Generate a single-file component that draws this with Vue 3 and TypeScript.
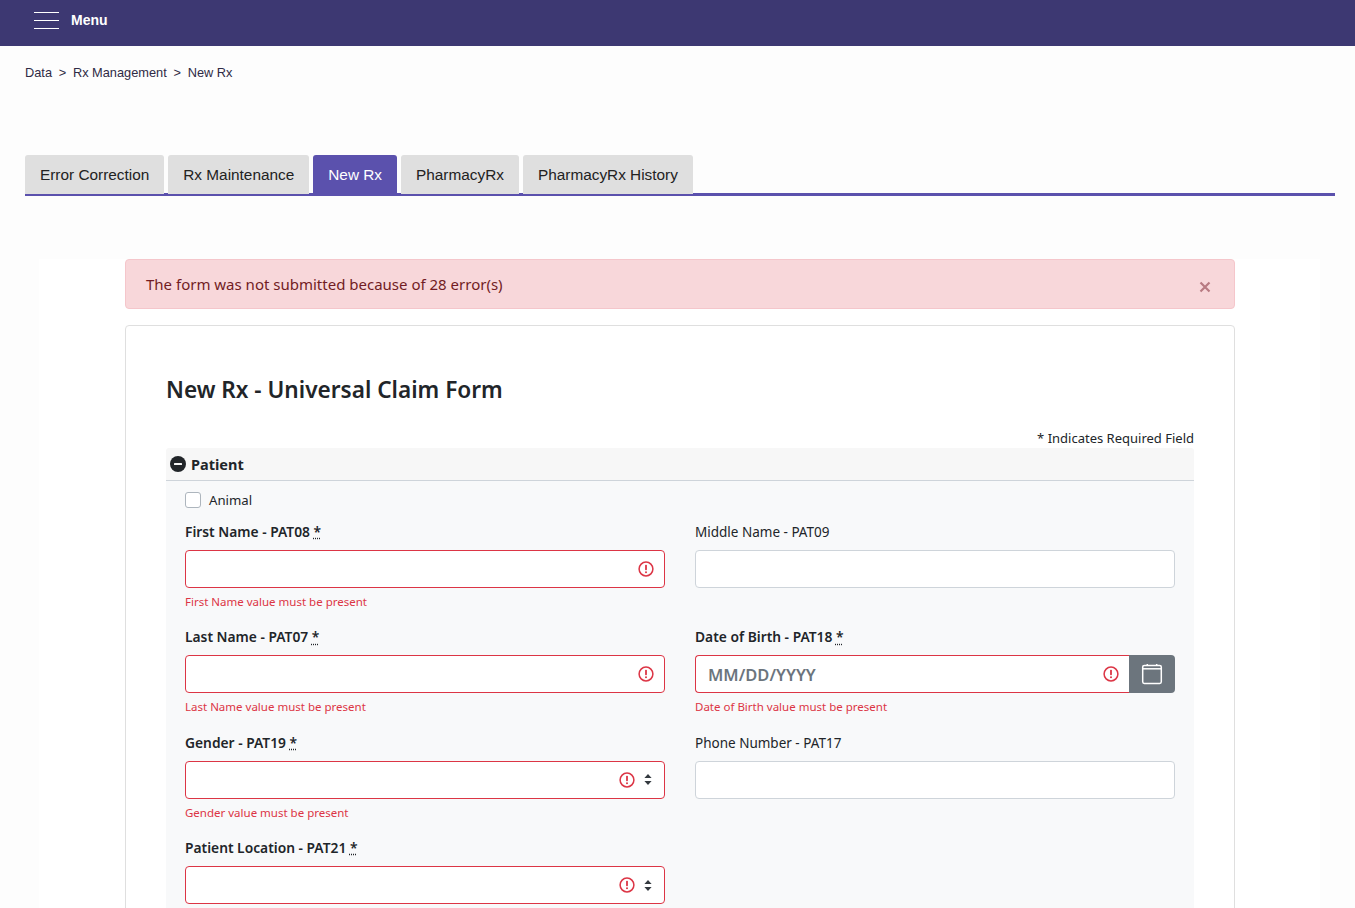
<script setup lang="ts">
interface Field {
  label: string;
  required?: boolean;
  invalid?: boolean;
  error?: string;
  kind?: 'text' | 'date' | 'select';
  placeholder?: string;
}

const tabs = ['Error Correction', 'Rx Maintenance', 'New Rx', 'PharmacyRx', 'PharmacyRx History'];
const activeTab = 'New Rx';

const rows: Field[][] = [
  [
    { label: 'First Name - PAT08', required: true, invalid: true, error: 'First Name value must be present' },
    { label: 'Middle Name - PAT09' },
  ],
  [
    { label: 'Last Name - PAT07', required: true, invalid: true, error: 'Last Name value must be present' },
    { label: 'Date of Birth - PAT18', required: true, invalid: true, error: 'Date of Birth value must be present', kind: 'date', placeholder: 'MM/DD/YYYY' },
  ],
  [
    { label: 'Gender - PAT19', required: true, invalid: true, error: 'Gender value must be present', kind: 'select' },
    { label: 'Phone Number - PAT17' },
  ],
  [
    // message sits below the fold in the screenshot
    { label: 'Patient Location - PAT21', required: true, invalid: true, kind: 'select' },
  ],
];
</script>

<template>
  <div class="page">
    <header class="topbar">
      <span class="burger"><i></i><i></i><i></i></span>
      <span class="menu-label">Menu</span>
    </header>

    <nav class="crumbs">
      <span>Data</span><span class="sep">&gt;</span>
      <span>Rx Management</span><span class="sep">&gt;</span>
      <span>New Rx</span>
    </nav>

    <div class="tabs">
      <button v-for="t in tabs" :key="t" class="tab" :class="{ active: t === activeTab }">{{ t }}</button>
    </div>

    <main class="panel">
      <div class="alert">
        <span>The form was not submitted because of 28 error(s)</span>
        <svg class="alert-close" viewBox="0 0 12 12" width="12" height="12">
          <path d="M1.5 1.5l9 9M10.5 1.5l-9 9" stroke="currentColor" stroke-width="2.2" fill="none" />
        </svg>
      </div>

      <section class="card">
        <h1 class="title">New Rx - Universal Claim Form</h1>
        <p class="req-note">* Indicates Required Field</p>

        <div class="sec-head">
          <svg viewBox="0 0 16 16" width="16" height="16">
            <circle cx="8" cy="8" r="8" fill="#212529" />
            <rect x="4" y="7" width="8" height="2" rx="0.5" fill="#f7f7f7" />
          </svg>
          <span>Patient</span>
        </div>

        <div class="sec-body">
          <label class="check"><span class="box"></span>Animal</label>

          <div v-for="(row, i) in rows" :key="i" class="row">
            <div v-for="f in row" :key="f.label" class="field">
              <div class="label" :class="{ strong: f.required }">
                {{ f.label }}
                <abbr v-if="f.required" class="star">*</abbr>
              </div>
              <div class="control-wrap">
                <div class="control" :class="{ invalid: f.invalid, joined: f.kind === 'date' }">
                  <span v-if="f.placeholder" class="placeholder">{{ f.placeholder }}</span>
                  <svg v-if="f.invalid" class="err-icon" viewBox="0 0 16 16" width="16" height="16">
                    <circle cx="8" cy="8" r="6.9" fill="none" stroke="#dc3545" stroke-width="1.5" />
                    <rect x="7.1" y="3.8" width="1.8" height="5.4" rx="0.7" fill="#dc3545" />
                    <circle cx="8" cy="11.2" r="1" fill="#dc3545" />
                  </svg>
                  <svg v-if="f.kind === 'select'" class="sort" viewBox="0 0 8 11" width="8" height="11">
                    <path d="M4 0l3.6 4H.4zM4 11L.4 7h7.2z" fill="#343a40" />
                  </svg>
                </div>
                <button v-if="f.kind === 'date'" class="cal">
                  <svg viewBox="0 0 22 22" width="22" height="22">
                    <rect x="1.7" y="2.4" width="18.6" height="18" rx="1.6" fill="none" stroke="#fff" stroke-width="1.5" />
                    <path d="M1.7 5.8h18.6" stroke="#fff" stroke-width="1.5" />
                    <path d="M6.3 1v2M15.7 1v2" stroke="#fff" stroke-width="1.5" />
                  </svg>
                </button>
              </div>
              <div v-if="f.error" class="err-msg">{{ f.error }}</div>
            </div>
          </div>
        </div>
      </section>
    </main>
  </div>
</template>

<style>
html, body {
  margin: 0;
  overflow: hidden;
  background: #fdfdfd;
}
</style>

<style scoped>
.page {
  height: 908px;
  overflow: hidden;
  background: #fdfdfd;
  font-family: "Noto Sans", "Open Sans", sans-serif;
  font-size: 14px;
  color: #212529;
}

.topbar {
  height: 46px;
  background: #3d3872;
  display: flex;
  align-items: flex-start;
  padding-left: 34px;
  box-sizing: border-box;
  color: #fff;
}
.burger {
  width: 25px;
  padding-top: 12px;
  display: flex;
  flex-direction: column;
  gap: 7px;
}
.burger i {
  display: block;
  height: 1px;
  background: #fff;
}
.menu-label {
  margin-left: 12px;
  margin-top: 12px;
  font: bold 14px/16px "Liberation Sans", Arial, sans-serif;
}

.crumbs {
  margin: 20px 0 0 25px;
  height: 13px;
  font: 12.8px/14px "Liberation Sans", Arial, sans-serif;
  color: #2f2b45;
  display: flex;
}
.sep {
  margin: 0 6.7px;
}

.tabs {
  margin: 76px 20px 0 25px;
  height: 41px;
  box-sizing: border-box;
  border-bottom: 3px solid #5b51ad;
  display: flex;
  gap: 4px;
}
.tab {
  height: 39px;
  padding: 0 15px;
  border: 0;
  border-radius: 3px 3px 0 0;
  background: #dfdfdf;
  color: #222;
  font: 15.37px/38px "Liberation Sans", Arial, sans-serif;
}
.tab.active {
  background: #5b51ad;
  color: #fff;
}

.panel {
  margin: 63px 35px 0 39px;
  padding: 0 85px 0 86px;
  background: #fff;
  height: 700px;
}

.alert {
  height: 50px;
  box-sizing: border-box;
  padding: 0 23px 0 20px;
  background: #f8d7da;
  border: 1px solid #f5c6cb;
  border-radius: 4px;
  color: #721c24;
  font-size: 15px;
  display: flex;
  justify-content: space-between;
  align-items: center;
}
.alert-close {
  color: #b87a82;
  margin-top: 5px;
}

.card {
  margin-top: 16px;
  padding: 0 40px;
  border: 1px solid #dfdfdf;
  border-radius: 4px;
  height: 640px;
}
.title {
  margin: 48px 0 0;
  font-size: 22.6px;
  line-height: 32px;
  font-weight: 600;
  color: #212529;
}
.req-note {
  margin: 23px 0 0;
  height: 19px;
  line-height: 18px;
  text-align: right;
  font-size: 13px;
  color: #212529;
}
.sec-head {
  height: 33px;
  box-sizing: border-box;
  padding-left: 4px;
  background: #f7f7f7;
  border-bottom: 1px solid #ced4da;
  border-radius: 3px 3px 0 0;
  display: flex;
  align-items: center;
  gap: 5px;
  font-size: 14.5px;
  font-weight: 700;
}
.sec-body {
  background: #f8f9fa;
  padding: 0 19px;
  height: 500px;
}
.check {
  height: 37px;
  padding-bottom: 2px;
  display: flex;
  align-items: center;
  gap: 8px;
  font-size: 13.2px;
}
.box {
  width: 14px;
  height: 14px;
  border: 1px solid #adb5bd;
  border-radius: 3px;
  background: #fff;
}
.row {
  display: grid;
  grid-template-columns: 480px 480px;
  column-gap: 30px;
  height: 105.4px;
}
.label {
  height: 24px;
  margin-bottom: 6px;
  line-height: 24px;
  font-size: 13.5px;
}
.label.strong {
  font-size: 13.8px;
  font-weight: 600;
}
.star {
  text-decoration: underline dotted;
}
.control-wrap {
  display: flex;
}
.control {
  flex: 1;
  height: 38px;
  box-sizing: border-box;
  background: #fff;
  border: 1px solid #ced4da;
  border-radius: 4px;
  display: flex;
  align-items: center;
  justify-content: flex-end;
  padding: 0 10px 0 12px;
  gap: 9px;
}
.control.invalid {
  border-color: #dc3545;
}
.control.joined {
  border-radius: 4px 0 0 4px;
  border-right: 0;
}
.placeholder {
  margin-right: auto;
  font-size: 16.5px;
  font-weight: 600;
  color: #6c757d;
}
.sort {
  margin-right: 2px;
}
.cal {
  width: 46px;
  height: 38px;
  border: 0;
  padding: 0;
  background: #6c757d;
  border-radius: 0 4px 4px 0;
  display: flex;
  align-items: center;
  justify-content: center;
}
.err-msg {
  margin-top: 6px;
  font-size: 11.5px;
  line-height: 16px;
  color: #dc3545;
}
</style>
